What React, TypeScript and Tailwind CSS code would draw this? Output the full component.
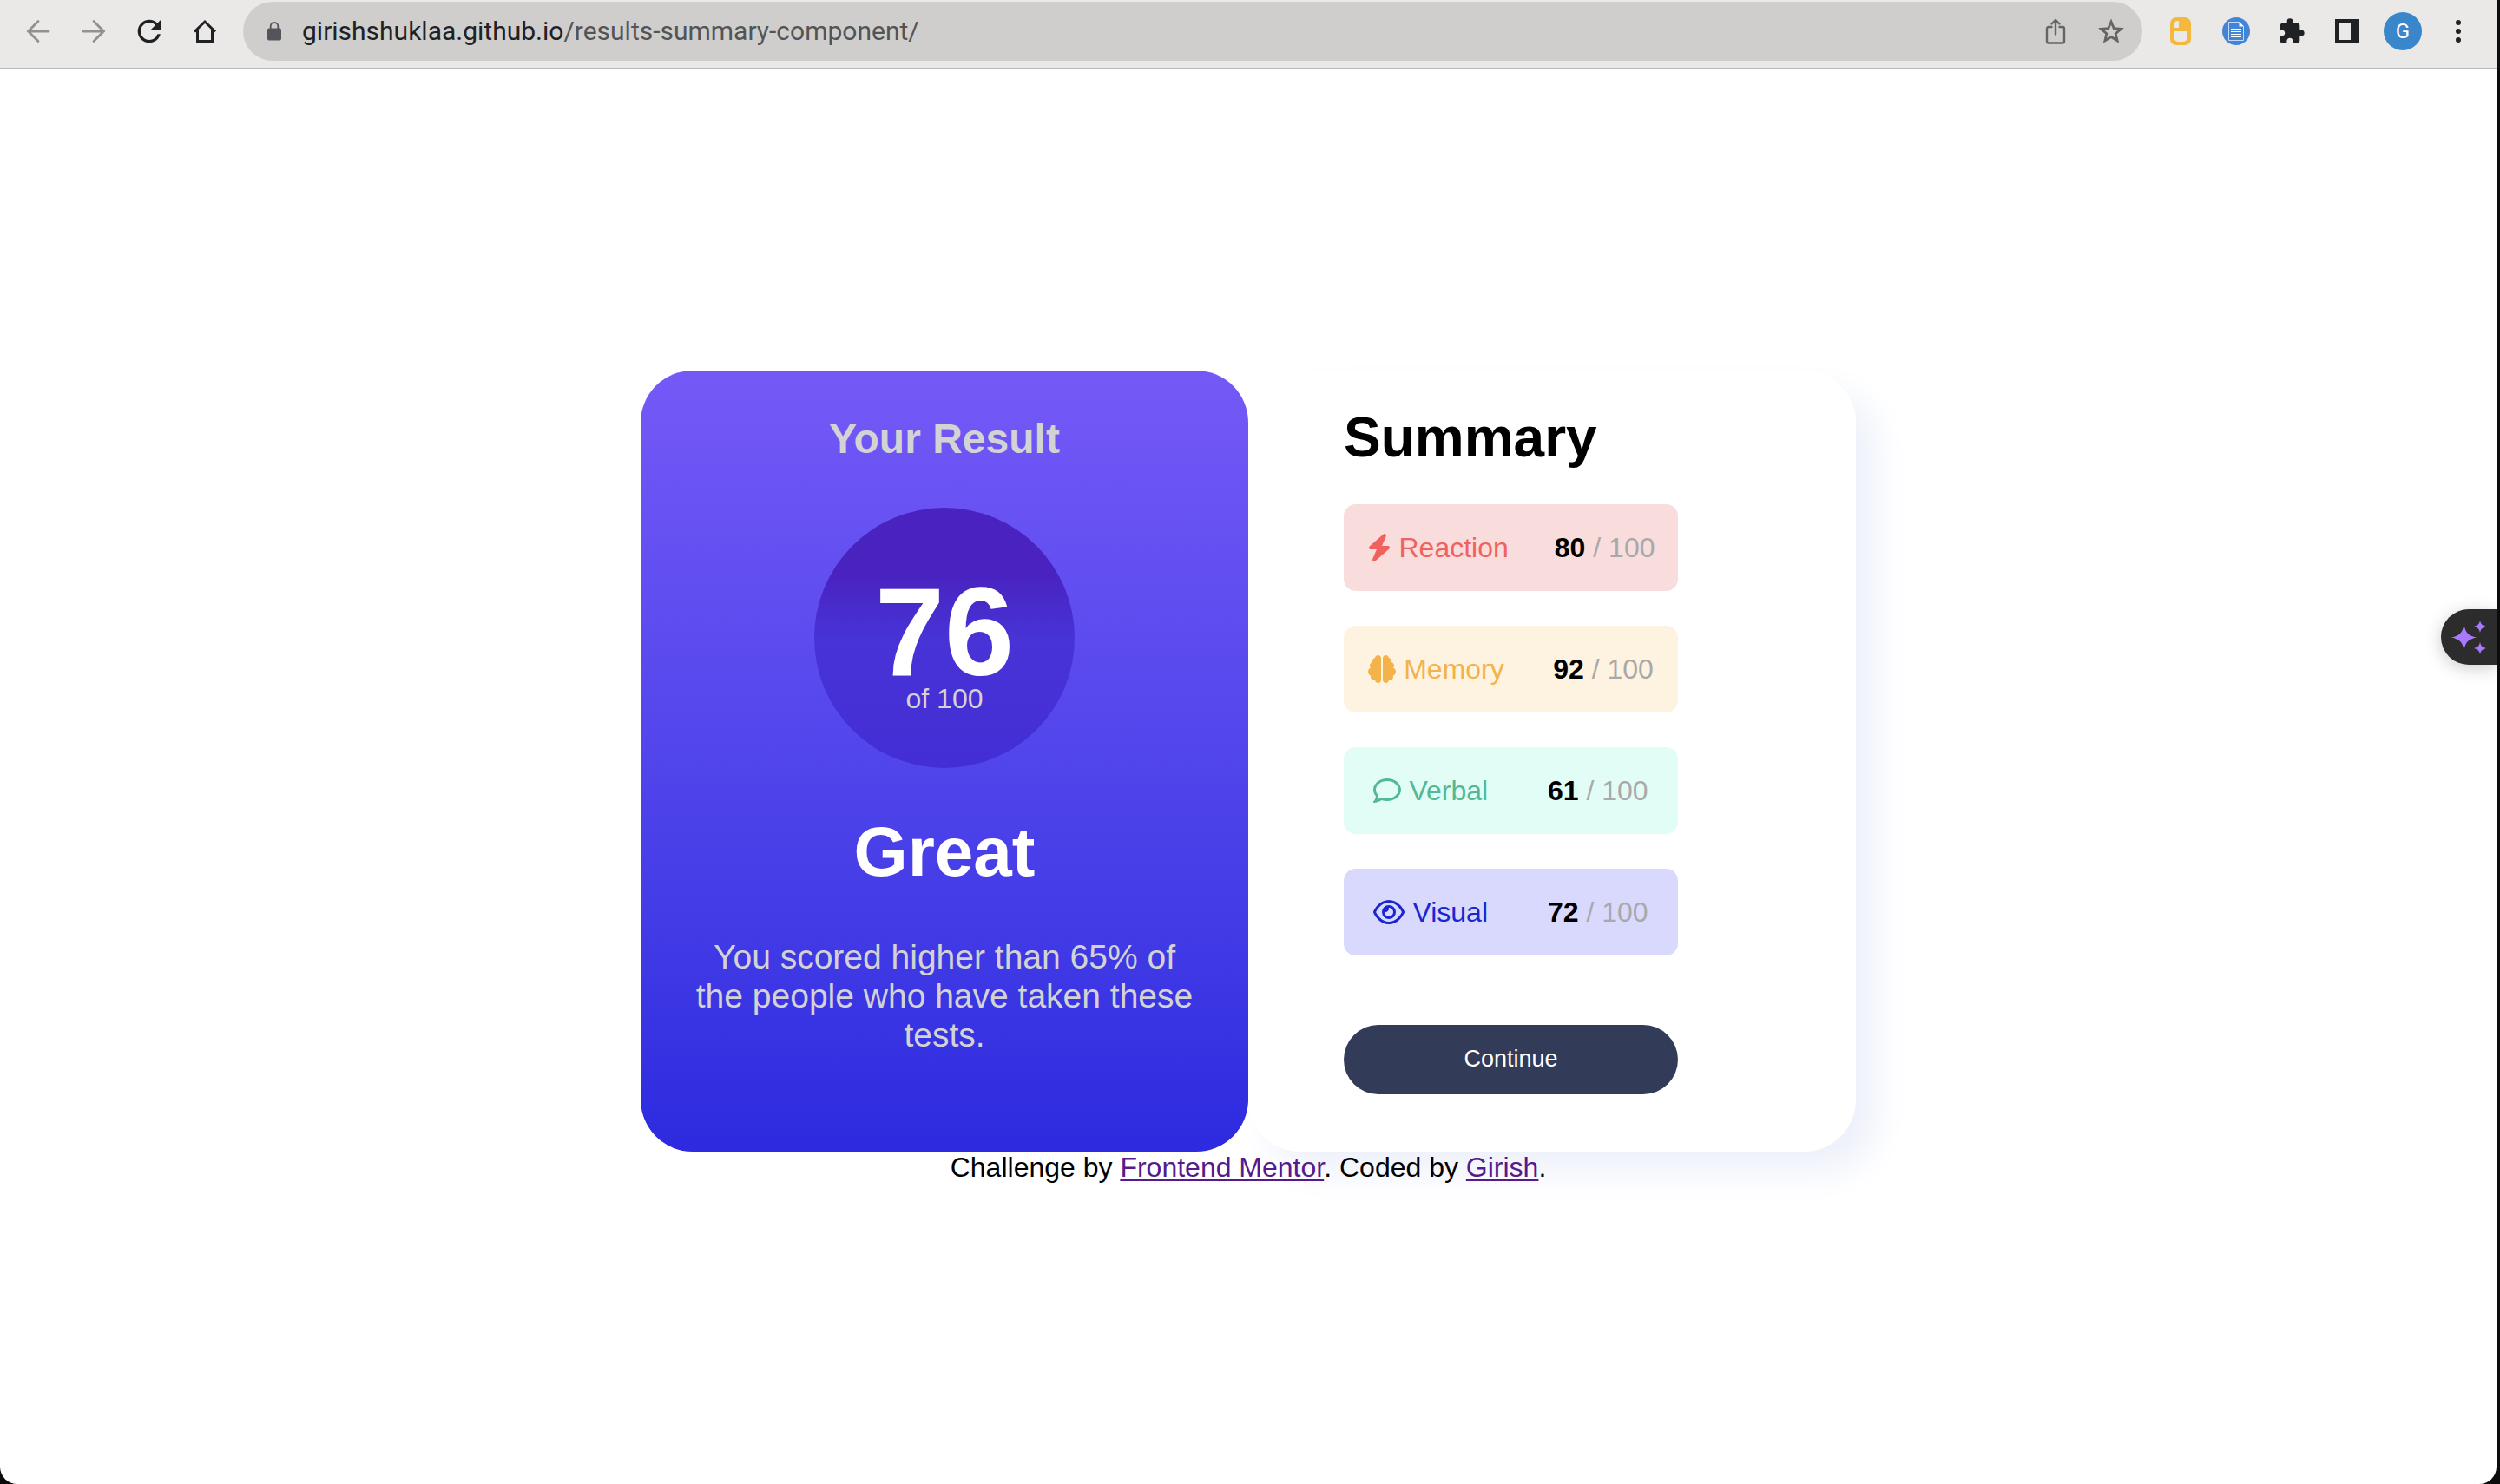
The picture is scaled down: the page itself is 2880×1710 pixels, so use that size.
import type { ReactNode } from "react";
import { FaBolt, FaBrain, FaRegComment, FaRegEye } from "react-icons/fa6";
import { MdExtension, MdRefresh } from "react-icons/md";

function ToolButton({ label, children }: { label: string; children: ReactNode }) {
  return (
    <button type="button" aria-label={label} className="flex h-16 w-16 shrink-0 items-center justify-center">
      {children}
    </button>
  );
}

function Toolbar() {
  return (
    <header className="flex h-20 items-start border-b-2 border-[#b9b8b6] bg-[#eae9e7] px-3">
      <nav aria-label="Browser" className="flex h-[72px] items-center text-[#202124]">
        <ToolButton label="Back">
          <svg viewBox="0 0 28 28" className="size-7 text-[#929190]" fill="none" stroke="currentColor" strokeWidth="2.8" strokeLinecap="round">
            <path d="M26 14H2.5M14 2.5 2.5 14 14 25.5" />
          </svg>
        </ToolButton>
        <ToolButton label="Forward">
          <svg viewBox="0 0 28 28" className="size-7 text-[#929190]" fill="none" stroke="currentColor" strokeWidth="2.8" strokeLinecap="round">
            <path d="M2 14h23.5M14 2.5 25.5 14 14 25.5" />
          </svg>
        </ToolButton>
        <ToolButton label="Reload">
          <MdRefresh className="size-10" />
        </ToolButton>
        <ToolButton label="Home">
          <svg viewBox="0 0 28 28" className="size-7" fill="none" stroke="currentColor" strokeWidth="3">
            <path d="M2 14.5 14 3l12 11.500M5.500 12v13.500h17V12" />
          </svg>
        </ToolButton>
      </nav>
      <div className="ml-3 mt-0.5 flex h-[68px] min-w-0 flex-1 items-center rounded-full bg-[#cfcecc] pl-7">
        <svg viewBox="0 0 16 22" className="h-[22px] w-4 shrink-0 text-[#54555a]">
          <path d="M3.700 9V5.300a4.300 4.300 0 0 1 8.600 0V9" fill="none" stroke="currentColor" strokeWidth="1.8" />
          <rect y="7.5" width="16" height="14" rx="2" fill="currentColor" />
        </svg>
        <p className="ml-6 flex-1 truncate font-[Roboto,sans-serif] text-[30px] leading-9 text-[#535456]">
          <span className="text-[#202124]">girishshuklaa.github.io</span>/results-summary-component/
        </p>
        <div className="flex pr-1 text-[#646567]">
          <ToolButton label="Share">
            <svg viewBox="0 0 24 30" className="h-[30px] w-6" fill="none" stroke="currentColor" strokeWidth="2.4" strokeLinecap="round" strokeLinejoin="round">
              <path d="M7.500 10H4a2 2 0 0 0-2 2v14.500a2 2 0 0 0 2 2h16a2 2 0 0 0 2-2V12a2 2 0 0 0-2-2h-3.500M12 18.500V2M7.500 6.500 12 2l4.500 4.500" />
            </svg>
          </ToolButton>
          <ToolButton label="Bookmark">
            <svg viewBox="0 0 30 30" className="size-[30px]" fill="none" stroke="currentColor" strokeWidth="2.8">
              <path d="m15 4 3.200 7.600 8.300.7-6.300 5.400 1.900 8.100-7.100-4.300-7.100 4.300 1.900-8.100-6.300-5.400 8.300-.7z" />
            </svg>
          </ToolButton>
        </div>
      </div>
      <div className="ml-3 flex h-[72px] items-center text-[#202124]">
        <ToolButton label="Mouse extension">
          <svg viewBox="0 0 24 32" className="h-8 w-6">
            <rect width="24" height="32" rx="7" fill="#f5b83f" />
            <path d="M4 12V9a5 5 0 0 1 5-5h1v8zM4 16h16v7a5 5 0 0 1-5 5H9a5 5 0 0 1-5-5z" fill="#eae9e7" />
          </svg>
        </ToolButton>
        <ToolButton label="Document extension">
          <svg viewBox="0 0 32 32" className="size-8">
            <circle cx="16" cy="16" r="16" fill="#4285d6" />
            <path d="M7.500 5.500h12l5 5v16h-17z" fill="none" stroke="#c4d8f3" />
            <path d="M19.500 5v5.500H25z" fill="#fff" />
            <path d="M10 13.500h12M10 16.500h12M10 19.500h12M10 22.500h12" stroke="#fff" />
          </svg>
        </ToolButton>
        <ToolButton label="Extensions">
          <MdExtension className="size-8" />
        </ToolButton>
        <ToolButton label="Side panel">
          <svg viewBox="0 0 28 28" className="size-7">
            <path fillRule="evenodd" d="M0 0h28v28H0zM4 4v20h14V4z" fill="currentColor" />
          </svg>
        </ToolButton>
        <ToolButton label="Profile">
          <span className="flex size-11 items-center justify-center rounded-full bg-[#3a86cb] font-[Roboto,sans-serif] text-2xl text-white">G</span>
        </ToolButton>
        <ToolButton label="Menu">
          <svg viewBox="0 0 6 26" className="h-[26px] w-1.5" fill="currentColor">
            <circle cx="3" cy="3" r="3" />
            <circle cx="3" cy="13" r="3" />
            <circle cx="3" cy="23" r="3" />
          </svg>
        </ToolButton>
      </div>
    </header>
  );
}

const scores = [
  { name: "Reaction", value: 80, icon: <FaBolt className="h-8 w-7" />, style: "bg-[#f9dcdc] text-[#f0625d]" },
  { name: "Memory", value: 92, icon: <FaBrain className="size-8" />, style: "bg-[#fdf3e0] text-[#f3b24a]" },
  { name: "Verbal", value: 61, icon: <FaRegComment className="size-8" />, style: "bg-[#e1fdf6] text-[#52b994]" },
  { name: "Visual", value: 72, icon: <FaRegEye className="h-8 w-9" />, style: "bg-[#d8d9fd] text-[#1a27d1]" },
];

function ResultCard() {
  return (
    <section className="z-10 flex h-[900px] w-[700px] flex-col items-center rounded-[60px] bg-linear-to-b from-[#7559f7] to-[#2d2adf] px-14 pt-[51px] text-center text-[#d3d3d3]">
      <h2 className="text-5xl leading-[56px] font-bold">Your Result</h2>
      <div className="mt-[51px] flex size-[300px] flex-col items-center rounded-full bg-linear-to-b from-[#4922c0] from-25% via-[#4733d6] via-50% to-[#432ed5] pt-[86px]">
        <span className="text-[144px] leading-[116px] font-bold text-white">76</span>
        <span className="text-[32px] leading-9 text-[#d3d3d3]">of 100</span>
      </div>
      <h1 className="mt-[51px] text-[80px] leading-[92px] font-bold text-white">Great</h1>
      <p className="mt-[52px] text-[39px] leading-[45px]">
        You scored higher than 65% of the people who have taken these tests.
      </p>
    </section>
  );
}

function SummaryCard() {
  return (
    <section className="h-[900px] w-[700px] rounded-[60px] px-[110px] pt-10 shadow-[24px_24px_40px_#eef1fb]">
      <h2 className="text-[64px] leading-[74px] font-bold text-black">Summary</h2>
      <ul className="mt-10 flex w-[385px] flex-col gap-10">
        {scores.map((s) => (
          <li key={s.name} className={`flex h-[100px] items-center justify-around rounded-[14px] text-[32px] leading-9 ${s.style}`}>
            <span className="flex items-center gap-[9px]">
              {s.icon}
              {s.name}
            </span>
            <span className="text-[#a9a9a9]">
              <b className="font-bold text-black">{s.value}</b> / 100
            </span>
          </li>
        ))}
      </ul>
      <button type="button" className="mt-20 h-20 w-[385px] rounded-full bg-[#323b58] text-[27px] text-white">
        Continue
      </button>
    </section>
  );
}

export default function App() {
  return (
    <div className="flex min-h-screen bg-[#0b0c0b] pr-1 font-['Liberation_Sans',Arial,sans-serif]">
      <div className="relative flex flex-1 flex-col overflow-hidden rounded-b-[20px] bg-white">
        <Toolbar />
        <main className="flex flex-1 flex-col items-center justify-center">
          <div className="flex">
            <ResultCard />
            <SummaryCard />
          </div>
          <footer className="relative text-[32px] leading-[37px] text-black">
            Challenge by{" "}
            <a href="https://www.frontendmentor.io" className="text-[#551a8b] underline">Frontend Mentor</a>. Coded by{" "}
            <a href="https://github.com/girishshuklaa" className="text-[#551a8b] underline">Girish</a>.
          </footer>
        </main>
        <button type="button" aria-label="Assistant" className="absolute top-[702px] right-0 flex h-16 w-16 items-center rounded-l-full bg-[#2c2c2c] pl-3 shadow-[0_4px_20px_#00000033]">
          <svg viewBox="0 0 40 40" className="size-10" fill="#a879fb">
            <path d="M14.500 6q1.500 7.500 4.500 10 3 3 10 4.500-7 1.500-10 4.500-3 2.500-4.500 10-1.500-7.500-4.500-10-3-3-10-4.500 7-1.500 10-4.500 3-2.500 4.500-10z" />
            <path d="M33 1q.7 3.500 2.300 4.700Q37 7.300 40 8q-3 .7-4.700 2.300Q33.700 11.500 33 15q-.7-3.500-2.300-4.700Q29 8.700 26 8q3-.7 4.700-2.300Q32.300 4.500 33 1zM33 26q.7 3.500 2.300 4.700Q37 32.300 40 33q-3 .7-4.700 2.300Q33.700 36.500 33 40q-.7-3.500-2.300-4.700Q29 33.700 26 33q3-.7 4.700-2.300Q32.300 29.500 33 26z" />
          </svg>
        </button>
      </div>
    </div>
  );
}
